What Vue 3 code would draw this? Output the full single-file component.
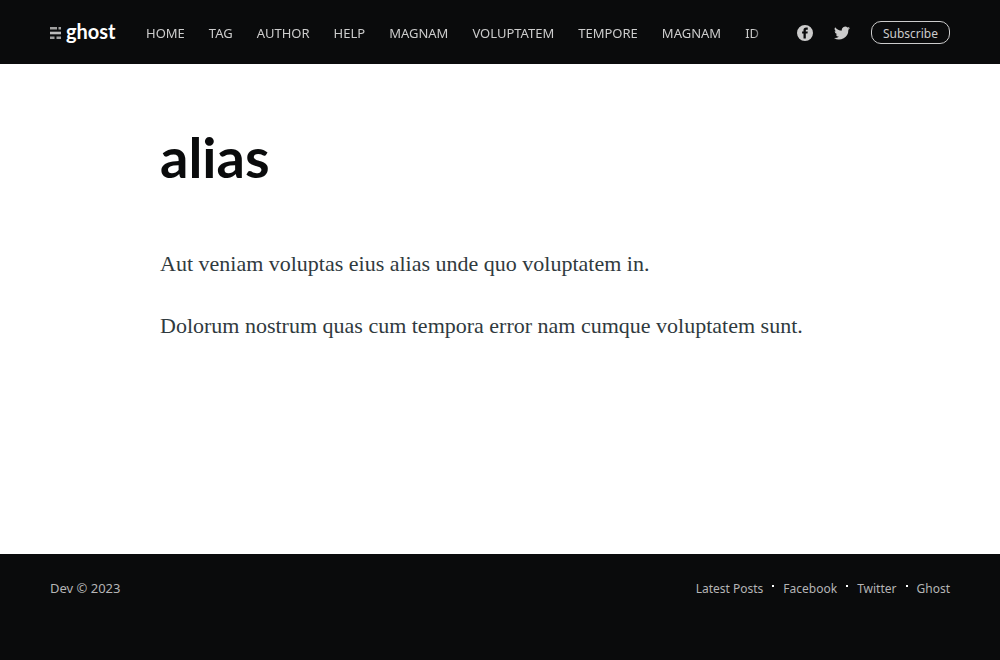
<script setup>
const navItems = ['Home', 'Tag', 'Author', 'Help', 'magnam', 'voluptatem', 'tempore', 'magnam', 'id']
const footerLinks = ['Latest Posts', 'Facebook', 'Twitter', 'Ghost']
const paragraphs = [
  'Aut veniam voluptas eius alias unde quo voluptatem in.',
  'Dolorum nostrum quas cum tempora error nam cumque voluptatem sunt.',
]
</script>

<template>
  <div class="site">
    <header class="site-header">
      <nav class="bar">
        <a class="logo" href="#" aria-label="Ghost home">
          <svg class="logo-mark" viewBox="0 0 12 12" aria-hidden="true">
            <path opacity=".85" d="M0 0h7v2.500H0zM8.500 0h2.500v2.500H8.500zM0 9.500h4.500v2.500H0zM6.500 9.500h4.500v2.500H6.500z" />
            <path d="M0 4.700h11v2.600H0z" />
          </svg>
          <span class="logo-name">ghost</span>
        </a>
        <ul class="nav">
          <li v-for="(item, i) in navItems" :key="i"><a href="#">{{ item }}</a></li>
        </ul>
        <div class="actions">
          <a class="social" href="#" aria-label="Facebook">
            <svg viewBox="0 0 32 32" aria-hidden="true">
              <path d="M16 0a16 16 0 1 0 0 32 16 16 0 0 0 0-32zm5.500 9.500h-2.600c-1 0-1.300.5-1.300 1.300V13h3.900l-.5 4h-3.400v10h-4.600V17h-2.800v-4H13v-2.800c0-3.400 1.900-5.200 5.200-5.200h3.300z" />
            </svg>
          </a>
          <a class="social" href="#" aria-label="Twitter">
            <svg viewBox="0 0 24 24" aria-hidden="true">
              <path d="M24 4.600a10 10 0 0 1-2.800.8 5 5 0 0 0 2.200-2.700c-1 .6-2 1-3.100 1.200a4.900 4.900 0 0 0-8.400 4.500A14 14 0 0 1 1.700 3.200a4.900 4.900 0 0 0 1.500 6.500 5 5 0 0 1-2.200-.6 5 5 0 0 0 3.900 4.900 5 5 0 0 1-2.200.1 4.900 4.900 0 0 0 4.600 3.400A10 10 0 0 1 0 19.500a14 14 0 0 0 21.500-12.400A10 10 0 0 0 24 4.600z" />
            </svg>
          </a>
          <button class="subscribe" type="button">Subscribe</button>
        </div>
      </nav>
    </header>

    <main class="content">
      <article class="post">
        <h1>alias</h1>
        <p v-for="text in paragraphs" :key="text">{{ text }}</p>
      </article>
    </main>

    <footer class="site-footer">
      <div class="footer-row">
        <span class="copyright"><a href="#">Dev</a> © 2023</span>
        <ul class="footer-nav">
          <li v-for="link in footerLinks" :key="link"><a href="#">{{ link }}</a></li>
        </ul>
      </div>
    </footer>
  </div>
</template>

<style>
body {
  margin: 0;
  background: #fff;
}
</style>

<style scoped>
.site {
  display: flex;
  flex-direction: column;
  min-height: 100vh;
  font-family: "Noto Sans", sans-serif;
}

a {
  color: inherit;
  text-decoration: none;
}

ul {
  display: flex;
  margin: 0;
  padding: 0;
  list-style: none;
}

.site-header {
  padding: 2px 50px 0;
  background: #0a0b0c;
  color: #ccc;
}

.bar {
  display: flex;
  align-items: center;
  height: 62px;
}

.logo {
  display: flex;
  flex: none;
  align-items: center;
  gap: 4px;
  width: 96px;
  color: #fff;
}

.logo-mark {
  width: 12px;
  height: 12px;
  fill: #bbb;
}

.logo-name {
  padding-bottom: 4px;
  font-family: Lato, sans-serif;
  font-size: 20px;
  font-weight: 700;
  line-height: 24px;
}

.nav {
  flex: 1;
  gap: 24px;
  min-width: 0;
  overflow: hidden;
  font-size: 13px;
  line-height: 20px;
  text-transform: uppercase;
  white-space: nowrap;
  mask-image: linear-gradient(to left, transparent, #000 12px);
}

.actions {
  display: flex;
  flex: none;
  align-items: center;
  gap: 21px;
  padding-left: 32px;
}

.social svg {
  display: block;
  width: 16px;
  height: 16px;
  fill: #ccc;
}

.subscribe {
  margin-bottom: 1px;
  padding: 2px 11px 0;
  border: 1px solid #ccc;
  border-radius: 10px;
  background: none;
  color: #ccc;
  font: 12px/19px "Noto Sans", sans-serif;
}

.content {
  flex: 1;
  padding: 64px 50px;
}

.post {
  max-width: 680px;
  margin: 0 auto;
}

h1 {
  margin: 0 0 62px;
  color: #0a0b0c;
  font-family: Lato, sans-serif;
  font-size: 56px;
  font-weight: 700;
  line-height: 58px;
}

p {
  margin: 0 0 30px;
  color: #303a3e;
  font-family: "Liberation Serif", serif;
  font-size: 22px;
  line-height: 32px;
}

.site-footer {
  padding: 24px 50px 60px;
  background: #0a0b0c;
  color: #b5b5b6;
  font-size: 12px;
  line-height: 22px;
}

.footer-row {
  display: flex;
  justify-content: space-between;
}

.copyright {
  font-size: 13px;
  line-height: 20px;
}

.footer-nav li {
  display: flex;
}

.footer-nav li + li::before {
  width: 2px;
  height: 2px;
  margin: 7px 9px 0;
  background: #fff;
  content: "";
}
</style>
